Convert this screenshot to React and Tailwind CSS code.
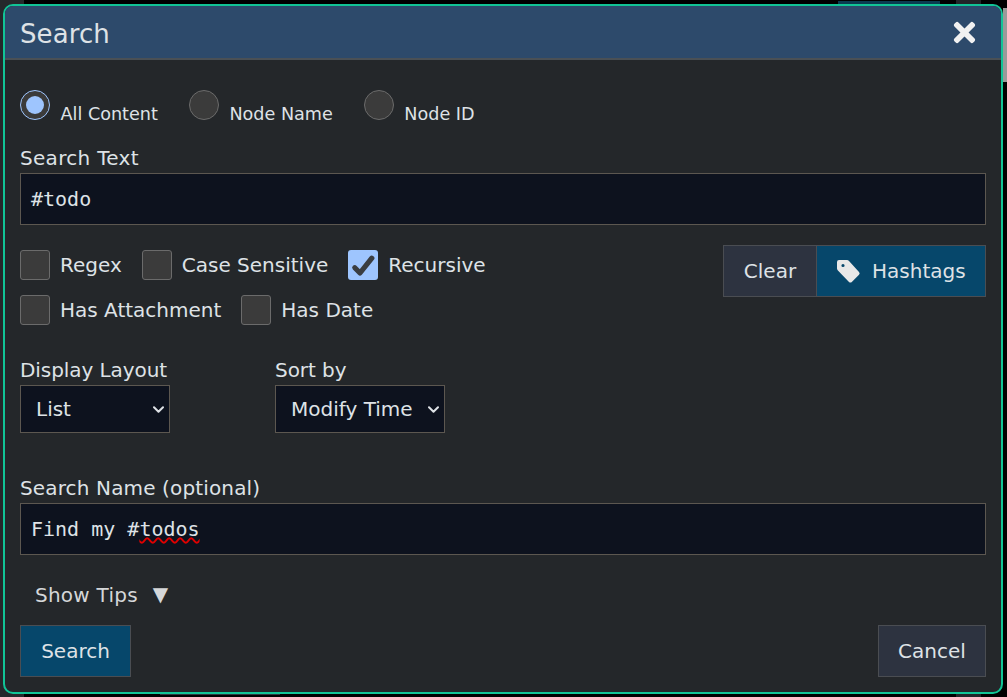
import { FaTimes } from 'react-icons/fa'

const sans = 'font-["DejaVu_Sans",sans-serif]'
const mono = 'font-["DejaVu_Sans_Mono",monospace]'

function Radio({ label, checked }) {
  return (
    <label className="flex items-start gap-[10.5px]">
      {checked ? (
        <span className="w-[30px] h-[30px] rounded-full border border-[#9ec5fe] bg-[#3b3b3b] flex items-center justify-center">
          <span className="w-[18px] h-[18px] rounded-full bg-[#9ec5fe]" />
        </span>
      ) : (
        <span className="w-[30px] h-[30px] rounded-full border border-[#6b6b6b] bg-[#3b3b3b]" />
      )}
      <span className="text-[17.6px] leading-[26px] mt-[11px] text-[#dee2e6]">{label}</span>
    </label>
  )
}

function Check({ label, checked }) {
  return (
    <label className="flex items-center gap-[10px]">
      {checked ? (
        <span className="w-[30px] h-[30px] rounded-[3px] bg-[#9ec5fe]">
          <svg width="30" height="30" viewBox="0 0 30 30" fill="none" stroke="#3a3d41" strokeWidth="5.2" strokeLinecap="round" strokeLinejoin="round">
            <path d="M6.8 17.7 12 23 23.8 8.2" />
          </svg>
        </span>
      ) : (
        <span className="w-[30px] h-[30px] rounded-[3px] border border-[#6b6b6b] bg-[#3b3b3b]" />
      )}
      <span className="text-[20px] leading-[30px] text-[#dee2e6]">{label}</span>
    </label>
  )
}

function Field({ label, value, labelClass }) {
  return (
    <div>
      <div className={`text-[20px] leading-[29px] text-[#dee2e6] ${labelClass}`}>{label}</div>
      <div className={`h-[52px] border border-[#5c5750] bg-[#0d121e] px-[10px] flex items-center text-[20px] text-[#dee2e6] ${mono}`}>
        {value}
      </div>
    </div>
  )
}

function Dropdown({ label, width, value, options }) {
  return (
    <div>
      <div className="text-[20px] leading-[29px] text-[#dee2e6] tracking-[-0.07px]">{label}</div>
      <div className={`relative ${width}`}>
        <select
          defaultValue={value}
          className="w-full h-[48px] appearance-none border border-[#5c5750] bg-[#0d121e] pl-[15px] pr-[20px] text-[20px] text-[#dee2e6] rounded-none"
        >
          {options.map(o => <option key={o}>{o}</option>)}
        </select>
        <svg width="11" height="7" viewBox="0 0 11 7" fill="none" stroke="#dee2e6" strokeWidth="2" strokeLinecap="round" strokeLinejoin="round" className="absolute right-[6px] top-[21px] pointer-events-none">
          <path d="M1 1.2 5.5 5.7 10 1.2" />
        </svg>
      </div>
    </div>
  )
}

function TagIcon() {
  return (
    <svg width="32" height="32" viewBox="0 0 32 32" className="shrink-0">
      <path
        fill="#e8e8e8"
        fillRule="evenodd"
        d="M5 7a2 2 0 0 1 2-2h8a3 3 0 0 1 2 .9l10 11a2 2 0 0 1 0 2.8l-7.2 7.2a2 2 0 0 1-2.8 0L5.9 15.6a3 3 0 0 1-.9-2ZM11 8.9a1.6 1.6 0 1 0 0 3.2 1.6 1.6 0 0 0 0-3.2Z"
      />
    </svg>
  )
}

// bits of the app that peek out around the dialog
function Behind() {
  return (
    <>
      <div className="absolute left-0 top-0 w-[24px] h-[697px] bg-[#25282b]" />
      <div className="absolute left-[838px] top-[1px] w-[102px] h-[3px] bg-[#0a3a4f]" />
      <div className="absolute left-[956px] top-0 w-[25px] h-[4px] bg-[#222528]" />
      <div className="absolute left-[160px] top-[694px] w-[120px] h-[1px] bg-[#2a3a40]" />
      <div className="absolute left-[956px] top-[694px] w-[25px] h-[3px] bg-[#222528]" />
      <div className="absolute left-[1003px] top-[8px] w-[4px] h-[74px] bg-[#9a9a9a]" />
    </>
  )
}

export default function App() {
  return (
    <div className={`relative w-[1007px] h-[697px] bg-black pt-[4px] pb-[3px] pl-[3px] pr-[4px] ${sans}`}>
      <Behind />
      <div className="relative h-full rounded-[10px] border-2 border-[#11c496] bg-[#24272a] overflow-hidden flex flex-col">
        <div className="h-[54px] shrink-0 bg-[#2d4a6b] border-b-2 border-[#4a5055] pl-[15px] pr-[21px] flex items-center justify-between">
          <span className="text-[26px] text-[#dee2e6] mt-[4px] tracking-[0.1px]">Search</span>
          <FaTimes size={31} className="text-[#f1f1f1]" />
        </div>

        <div className="flex-1 px-[15px] pt-[30px] flex flex-col">
          <div className="flex gap-[31px]">
            <Radio label="All Content" checked />
            <Radio label="Node Name" />
            <Radio label="Node ID" />
          </div>

          <div className="mt-[17px]">
            <Field label="Search Text" value="#todo" labelClass="tracking-[0.3px]" />
          </div>

          <div className="mt-[25px] flex justify-between items-start">
            <div className="flex flex-col gap-[15px]">
              <div className="flex gap-[20px]">
                <Check label="Regex" />
                <Check label="Case Sensitive" />
                <Check label="Recursive" checked />
              </div>
              <div className="flex gap-[20px]">
                <Check label="Has Attachment" />
                <Check label="Has Date" />
              </div>
            </div>
            <div className="flex mt-[-5px] text-[20px] text-[#dee2e6]">
              <button className="h-[52px] w-[94px] border border-[#4a4d52] bg-[#2d3340]">Clear</button>
              <button className="h-[52px] w-[169px] border border-[#4a4d52] border-l-0 bg-[#06476b] flex items-center pl-[15px] gap-[8px]">
                <TagIcon />
                Hashtags
              </button>
            </div>
          </div>

          <div className="mt-[31px] flex gap-[105px]">
            <Dropdown label="Display Layout" width="w-[150px]" value="List" options={['List', 'Detailed']} />
            <Dropdown label="Sort by" width="w-[170px]" value="Modify Time" options={['Modify Time', 'Create Time']} />
          </div>

          <div className="mt-[41px]">
            <Field
              label="Search Name (optional)"
              labelClass="tracking-[0.14px]"
              value={<span>Find my #<span className="underline decoration-wavy decoration-[#e00000] decoration-[1.5px] underline-offset-[1px]">todos</span></span>}
            />
          </div>

          <div className="mt-[25px] pl-[15px] text-[20px] leading-[30px] text-[#d5d7d9] flex items-center gap-[15px]">
            <span className="tracking-[0.25px]">Show Tips</span>
            <span className="mt-[-3px]">▼</span>
          </div>

          <div className="mt-[15px] flex justify-between text-[20px] text-[#dee2e6]">
            <button className="h-[52px] w-[111px] border border-[#4a4d52] bg-[#06476b]">Search</button>
            <button className="h-[52px] w-[108px] border border-[#4a4d52] bg-[#2d3340]">Cancel</button>
          </div>
        </div>
      </div>
    </div>
  )
}
